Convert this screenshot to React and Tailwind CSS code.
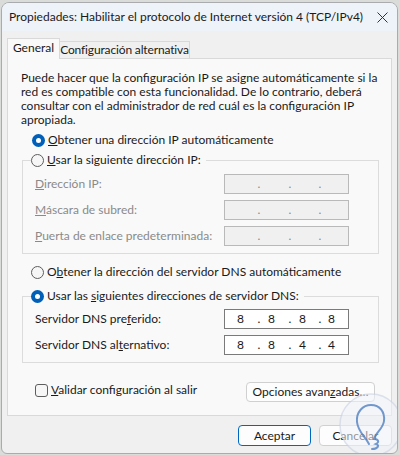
import React from "react";

const font = "font-['Lato','Noto_Sans',sans-serif]";

const Radio = ({ checked }) =>
  checked ? (
    <span className="w-[13px] h-[13px] rounded-full bg-[#005fb8] flex items-center justify-center shrink-0">
      <span className="w-[5px] h-[5px] rounded-full bg-white" />
    </span>
  ) : (
    <span className="w-[13px] h-[13px] rounded-full border border-[#5d5d5d] bg-[#f6f6f6] shrink-0" />
  );

const IpBox = ({ parts, disabled }) => (
  <div
    className={
      disabled
        ? "w-[125px] h-[20px] border border-[#b9b9b9] bg-[#f0f0f0] flex items-center pl-[12px] text-[#8a8a8a]"
        : "w-[125px] h-[20px] border border-[#7a7a7a] bg-white flex items-center pl-[12px] text-[#1a1a1a]"
    }
  >
    <span className="w-[7px] text-center">{parts[0]}</span>
    <span className="ml-[13px] w-[4px] text-center">.</span>
    <span className="ml-[7px] w-[7px] text-center">{parts[1]}</span>
    <span className="ml-[13px] w-[4px] text-center">.</span>
    <span className="ml-[7px] w-[7px] text-center">{parts[2]}</span>
    <span className="ml-[12px] w-[4px] text-center">.</span>
    <span className="ml-[6px] w-[7px] text-center">{parts[3]}</span>
  </div>
);

const Row = ({ label, parts, disabled }) => (
  <div className="flex items-center">
    <span className={disabled ? "w-[189px] text-[#8a8a8a]" : "w-[189px] text-[#1a1a1a]"}>{label}</span>
    <IpBox parts={parts} disabled={disabled} />
  </div>
);

const empty = ["", "", "", ""];

export default function App() {
  return (
    <div className={`w-[400px] h-[455px] bg-[#d9dcd8] pt-[2px] pl-[1px] overflow-hidden text-[12px] leading-[14px] text-[#1a1a1a] whitespace-nowrap ${font}`}>
      <div className="relative w-[397px] border border-[#a9abae] rounded-t-[8px] rounded-b-[6px] bg-[#f0f0f0] overflow-hidden">
        {/* Title bar */}
        <div className="h-[28px] bg-[#eef2f9] flex items-center justify-between pl-[7px] pr-[8px]">
          <span>Propiedades: Habilitar el protocolo de Internet versión 4 (TCP/IPv4)</span>
          <svg width="11" height="11" viewBox="0 0 11 11" className="mr-[1px]">
            <path d="M0.5 0.5 L10.5 10.5 M10.5 0.5 L0.5 10.5" stroke="#333" strokeWidth="1" fill="none" />
          </svg>
        </div>

        {/* Tabs */}
        <div className="pt-[7px] pl-[5px] flex items-end -mb-px relative z-10">
          <div className="h-[21px] w-[53px] border border-b-0 border-[#d9d9d9] bg-[#f9f9f9] flex items-center justify-center pb-[2px]">
            General
          </div>
          <div className="h-[18px] w-[130px] border-t border-r border-b border-[#d9d9d9] bg-[#f0f0f0] flex items-center justify-center tracking-[-0.15px]">
            Configuración alternativa
          </div>
        </div>

        {/* Panel */}
        <div className="mx-[5px] border border-[#d9d9d9] bg-[#f9f9f9] pt-[12px] pb-[13px]">
          <p className="pl-[13px]">
            Puede hacer que la configuración IP se asigne automáticamente si la
            <br />
            red es compatible con esta funcionalidad. De lo contrario, deberá
            <br />
            consultar con el administrador de red cuál es la configuración IP
            <br />
            apropiada.
          </p>

          <div className="mt-[6px] pl-[24px] flex items-center gap-[3px]">
            <Radio checked />
            <span>
              <u>O</u>btener una dirección IP automáticamente
            </span>
          </div>

          <fieldset className="mt-[6px] ml-[14px] mr-[12px] border border-[#dcdcdc] pl-[12px] pt-[7px] pb-[7px] flex flex-col gap-[6px]">
            <legend className="-ml-[4px] pr-[5px] flex items-center gap-[3px]">
              <Radio />
              <span>
                <u>U</u>sar la siguiente dirección IP:
              </span>
            </legend>
            <Row label={<><u>D</u>irección IP:</>} parts={empty} disabled />
            <Row label={<><u>M</u>áscara de subred:</>} parts={empty} disabled />
            <Row label={<><u>P</u>uerta de enlace predeterminada:</>} parts={empty} disabled />
          </fieldset>

          <div className="mt-[11px] pl-[23px] flex items-center gap-[3px]">
            <Radio />
            <span>
              O<u>b</u>tener la dirección del servidor DNS automáticamente
            </span>
          </div>

          <fieldset className="mt-[10px] ml-[14px] mr-[12px] border border-[#dcdcdc] pl-[12px] pt-[6px] pb-[7px] flex flex-col gap-[6px]">
            <legend className="-ml-[4px] pr-[5px] flex items-center gap-[3px]">
              <Radio checked />
              <span>
                Usar las <u>s</u>iguientes direcciones de servidor DNS:
              </span>
            </legend>
            <Row label={<>Servidor DNS pre<u>f</u>erido:</>} parts={["8", "8", "8", "8"]} />
            <Row label={<>Servidor DNS al<u>t</u>ernativo:</>} parts={["8", "8", "4", "4"]} />
          </fieldset>

          <div className="mt-[19px] pl-[27px] pr-[16px] flex items-start justify-between">
            <div className="mt-[1px] flex items-center gap-[3px]">
              <span className="w-[13px] h-[13px] rounded-[3px] border border-[#5d5d5d] bg-[#f6f6f6]" />
              <span>
                <u>V</u>alidar configuración al salir
              </span>
            </div>
            <button className="w-[129px] h-[20px] rounded-[4px] border border-[#d0d0d0] bg-[#fdfdfd] text-[12px]">
              Opciones avan<u>z</u>adas…
            </button>
          </div>
        </div>

        {/* Bottom buttons */}
        <div className="mt-[9px] pb-[7px] pr-[5px] flex justify-end gap-[8px]">
          <button className="w-[73px] h-[21px] rounded-[4px] border border-[#0067c0] bg-[#fdfdfd] text-[12px]">
            Aceptar
          </button>
          <button className="w-[73px] h-[21px] rounded-[4px] border border-[#d0d0d0] bg-[#fdfdfd] text-[12px]">
            Cancelar
          </button>
        </div>

        {/* watermark */}
        <svg
          width="66"
          height="66"
          viewBox="0 0 66 66"
          className="absolute left-[336px] top-[389px] pointer-events-none"
        >
          <circle cx="33" cy="33" r="31" fill="rgba(240,243,250,0.55)" stroke="rgba(200,208,225,0.6)" strokeWidth="1.5" />
          <path
            d="M31 52 C27 44 20 40 19 30 C18 20 25 13 33 13 C42 13 47 20 46 29 C45 37 38 40 36 47 C40 47 42 50 38 52 C42 53 40 57 34 57"
            fill="none"
            stroke="rgba(70,120,190,0.75)"
            strokeWidth="2"
            strokeLinecap="round"
          />
        </svg>
      </div>
    </div>
  );
}
